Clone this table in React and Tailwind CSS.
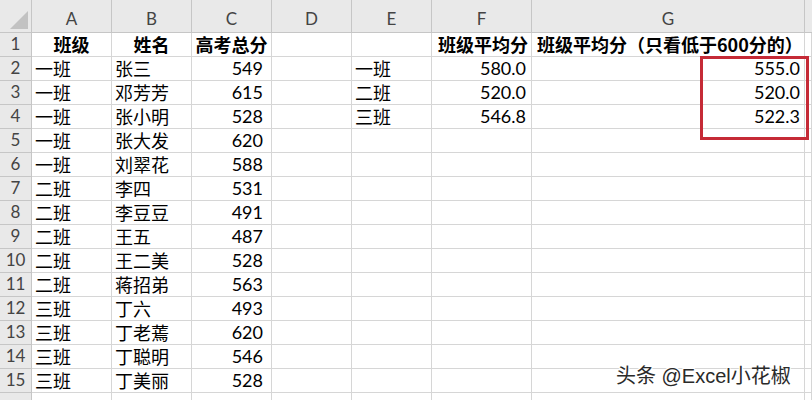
import React from "react";

const cols = ["A", "B", "C", "D", "E", "F", "G"];

const data = [
  ["一班", "张三", 549],
  ["一班", "邓芳芳", 615],
  ["一班", "张小明", 528],
  ["一班", "张大发", 620],
  ["一班", "刘翠花", 588],
  ["二班", "李四", 531],
  ["二班", "李豆豆", 491],
  ["二班", "王五", 487],
  ["二班", "王二美", 528],
  ["二班", "蒋招弟", 563],
  ["三班", "丁六", 493],
  ["三班", "丁老蔫", 620],
  ["三班", "丁聪明", 546],
  ["三班", "丁美丽", 528],
];

const summary = [
  ["一班", "580.0", "555.0"],
  ["二班", "520.0", "520.0"],
  ["三班", "546.8", "522.3"],
];

const cjk = "font-['Noto_Sans_CJK_SC',sans-serif]";
const num = "font-['Lato','Noto_Sans_CJK_SC',sans-serif]";

function Cell({ children, className = "" }) {
  return (
    <div
      className={`flex items-end pb-[1px] border-r border-b border-[#d6d6d6] overflow-visible whitespace-nowrap text-[18px] leading-[22px] text-black ${className}`}
    >
      {children}
    </div>
  );
}

function ColHead({ children }) {
  return (
    <div className="flex items-end justify-center pb-[2px] bg-[#e9e9e9] border-r border-b border-[#c6c6c6] text-[17px] leading-[22px] text-[#444] font-['Lato',sans-serif]">
      {children}
    </div>
  );
}

function RowHead({ children }) {
  return (
    <div className="flex items-end justify-center pb-[1px] bg-[#e9e9e9] border-r border-b border-[#c6c6c6] text-[17px] leading-[22px] text-[#444] font-['Lato',sans-serif]">
      {children}
    </div>
  );
}

export default function App() {
  const rows = [];
  for (let i = 0; i < 15; i++) {
    const r = i + 1;
    let a = "", b = "", c = "", e = "", f = "", g = "";
    if (r > 1) {
      [a, b, c] = data[i - 1];
    }
    if (r >= 2 && r <= 4) {
      [e, f, g] = summary[r - 2];
    }
    rows.push(
      <React.Fragment key={r}>
        <RowHead>{r}</RowHead>
        {r === 1 ? (
          <>
            <Cell className={`${cjk} font-bold justify-center`}>班级</Cell>
            <Cell className={`${cjk} font-bold justify-center`}>姓名</Cell>
            <Cell className={`${cjk} font-bold justify-center`}>高考总分</Cell>
            <Cell />
            <Cell />
            <Cell className={`${cjk} font-bold justify-end pr-[3px]`}>班级平均分</Cell>
            <Cell className={`${cjk} font-bold pl-[5px]`}>
              班级平均分（只看低于600分的）
            </Cell>
          </>
        ) : (
          <>
            <Cell className={`${cjk} pl-[3px]`}>{a}</Cell>
            <Cell className={`${cjk} pl-[3px]`}>{b}</Cell>
            <Cell className={`${num} justify-end pr-[8px]`}>{c}</Cell>
            <Cell />
            <Cell className={`${cjk} pl-[3px]`}>{e}</Cell>
            <Cell className={`${num} justify-end pr-[5px]`}>{f}</Cell>
            <Cell className={`${num} justify-end pr-[4px]`}>{g}</Cell>
          </>
        )}
        <Cell />
      </React.Fragment>
    );
  }

  return (
    <div className="relative w-[812px] h-[400px] overflow-hidden bg-white">
      <div className="grid grid-cols-[32px_80px_80px_80px_80px_80px_100px_273px_7px] grid-rows-[33px_repeat(16,24px)]">
        <div className="relative bg-[#e9e9e9] border-r border-b border-[#c6c6c6]">
          <div className="absolute right-[3px] bottom-[3px] w-0 h-0 border-l-[18px] border-l-transparent border-b-[18px] border-b-[#c2c2c2]" />
        </div>
        {cols.map((c) => (
          <ColHead key={c}>{c}</ColHead>
        ))}
        <div className="bg-[#e9e9e9] border-b border-[#c6c6c6]" />
        {rows}
        <RowHead />
        {Array.from({ length: 8 }).map((_, i) => (
          <Cell key={i} />
        ))}
      </div>

      <div className="absolute left-[700px] top-[56px] w-[109px] h-[84px] border-[3px] border-[#c52a36]" />

      <div className="absolute left-[616px] top-[363px] text-[20px] leading-[26px] text-[#2a2a2a] font-['Liberation_Sans','Noto_Sans_CJK_SC',sans-serif] [text-shadow:1px_1px_0_#fff,-1px_-1px_0_#fff,1px_-1px_0_#fff,-1px_1px_0_#fff]">
        头条 @Excel小花椒
      </div>
    </div>
  );
}
